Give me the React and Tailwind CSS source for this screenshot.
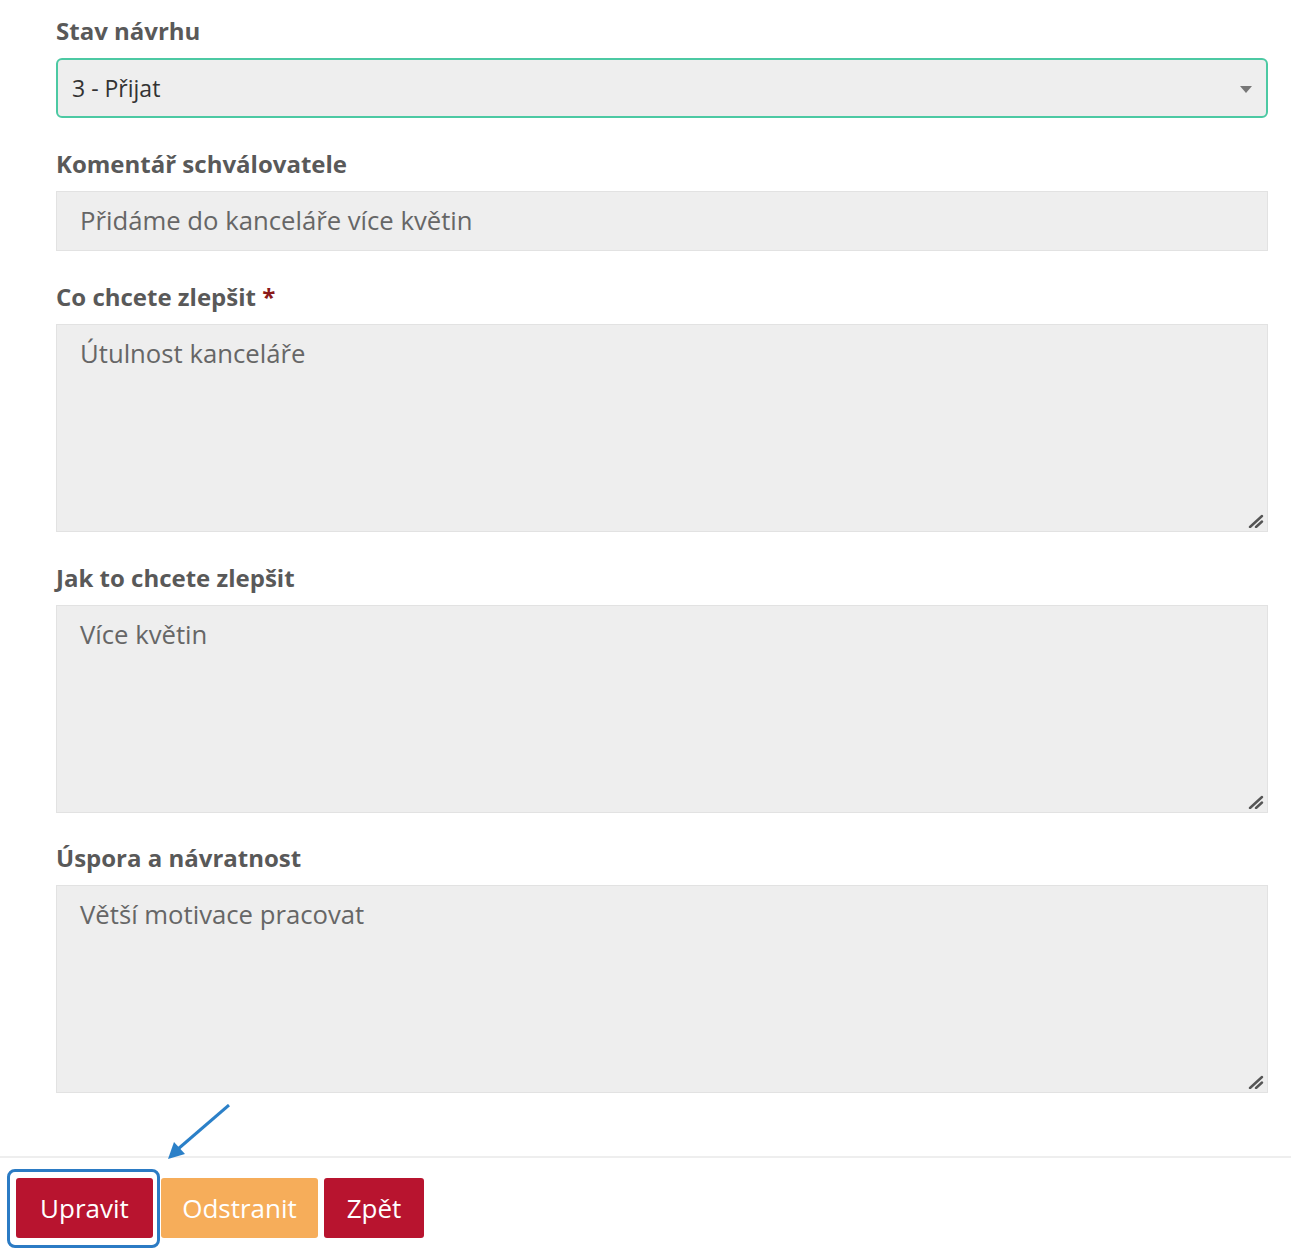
import React from "react";

function Resizer() {
  return (
    <svg className="absolute right-[3px] bottom-[3px]" width="16" height="14" viewBox="0 0 16 14">
      <path d="M2 13 L14 2" stroke="#555" strokeWidth="2.4" strokeLinecap="round" />
      <path d="M8 13 L14 7.5" stroke="#555" strokeWidth="2.4" strokeLinecap="round" />
    </svg>
  );
}

function Label({ children, required }) {
  return (
    <div className="text-[24px] leading-[30px] font-bold text-[#595959] mb-[12px]">
      {children}
      {required && <span className="text-[#8b1a1a]"> *</span>}
    </div>
  );
}

function Area({ text }) {
  return (
    <div className="relative h-[208px] bg-[#eeeeee] border border-[#e2e2e2] pl-[23px] pt-[13px] text-[25.7px] leading-[32px] text-[#666666]">
      {text}
      <Resizer />
    </div>
  );
}

export default function App() {
  return (
    <div className="w-full min-h-[1255px] bg-white" style={{ fontFamily: '"Open Sans", "Noto Sans", sans-serif' }}>
      <div className="pl-[56px] pr-[23px] pt-[16px]">
        <Label>Stav návrhu</Label>
        <div className="relative h-[60px] rounded-[6px] border-2 border-[#4cc9a3] bg-[#eeeeee] flex items-center pl-[14px] text-[23px] text-[#333333]">
          3 - Přijat
          <div className="absolute right-[14px] top-[26px] w-0 h-0 border-l-[6px] border-r-[6px] border-t-[7px] border-l-transparent border-r-transparent border-t-[#777777]" />
        </div>

        <div className="mt-[31px]">
          <Label>Komentář schválovatele</Label>
          <div className="h-[60px] bg-[#eeeeee] border border-[#e2e2e2] flex items-center pl-[23px] text-[25.7px] text-[#666666]">
            Přidáme do kanceláře více květin
          </div>
        </div>

        <div className="mt-[31px]">
          <Label required>Co chcete zlepšit</Label>
          <Area text="Útulnost kanceláře" />
        </div>

        <div className="mt-[31px]">
          <Label>Jak to chcete zlepšit</Label>
          <Area text="Více květin" />
        </div>

        <div className="mt-[30px]">
          <Label>Úspora a návratnost</Label>
          <Area text="Větší motivace pracovat" />
        </div>
      </div>

      <div className="relative mt-[63px] border-t-2 border-[#eeeeee]">
        <svg className="absolute left-[160px] top-[-54px]" width="75" height="60" viewBox="0 0 75 60">
          <path d="M69 1 L18 45" stroke="#2b80c8" strokeWidth="3" />
          <path d="M8 55 L14 38 L25 50 Z" fill="#2b80c8" />
        </svg>
        <div className="flex items-start pl-[16px] pt-[20px]">
          <div className="relative">
            <div className="absolute -left-[9px] -top-[9px] -right-[7px] -bottom-[10px] rounded-[8px] border-[3px] border-[#2b7bc4]" />
            <button className="h-[60px] w-[137px] rounded-[3px] bg-[#b8142f] text-white text-[26px]">Upravit</button>
          </div>
          <button className="ml-[8px] h-[60px] w-[157px] rounded-[3px] bg-[#f6ad5a] text-white text-[26px]">Odstranit</button>
          <button className="ml-[6px] h-[60px] w-[100px] rounded-[3px] bg-[#b8142f] text-white text-[26px]">Zpět</button>
        </div>
      </div>
    </div>
  );
}
